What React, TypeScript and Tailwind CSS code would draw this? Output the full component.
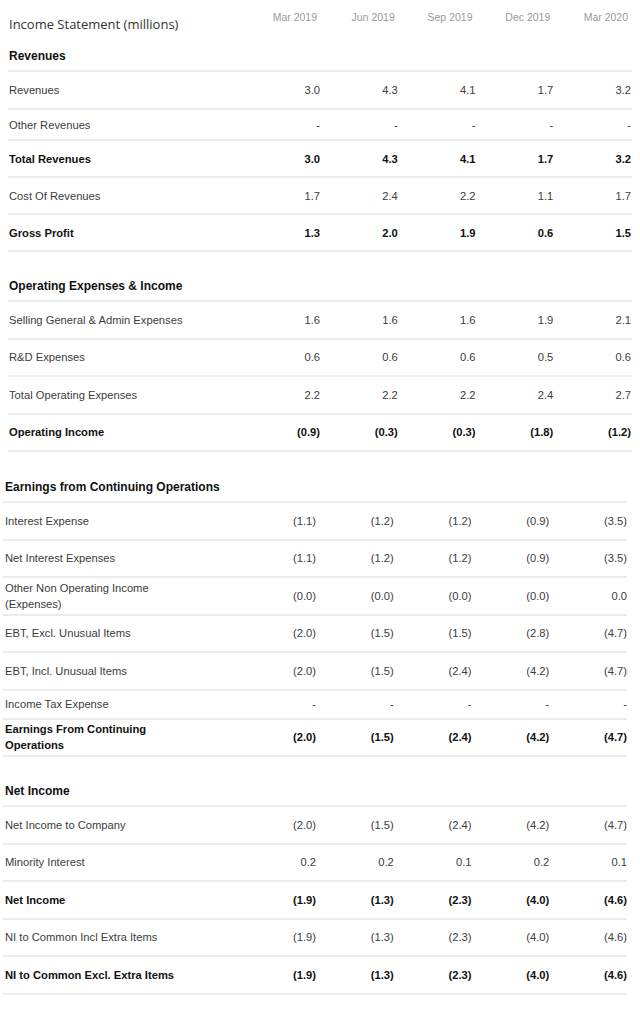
import React from "react";

type Row = { label: string; values: string[]; bold?: boolean; h?: string };
type Section = { title: string; rows: Row[]; mt: string };

const topSections: Section[] = [
  {
    title: "Revenues",
    mt: "mt-0",
    rows: [
      { label: "Revenues", values: ["3.0", "4.3", "4.1", "1.7", "3.2"], h: "h-[38px]" },
      { label: "Other Revenues", values: ["-", "-", "-", "-", "-"], h: "h-[31px]" },
      { label: "Total Revenues", values: ["3.0", "4.3", "4.1", "1.7", "3.2"], bold: true, h: "h-[37px]" },
      { label: "Cost Of Revenues", values: ["1.7", "2.4", "2.2", "1.1", "1.7"], h: "h-[37px]" },
      { label: "Gross Profit", values: ["1.3", "2.0", "1.9", "0.6", "1.5"], bold: true, h: "h-[37px]" },
    ],
  },
  {
    title: "Operating Expenses & Income",
    mt: "mt-[18px]",
    rows: [
      { label: "Selling General & Admin Expenses", values: ["1.6", "1.6", "1.6", "1.9", "2.1"] },
      { label: "R&D Expenses", values: ["0.6", "0.6", "0.6", "0.5", "0.6"] },
      { label: "Total Operating Expenses", values: ["2.2", "2.2", "2.2", "2.4", "2.7"] },
      { label: "Operating Income", values: ["(0.9)", "(0.3)", "(0.3)", "(1.8)", "(1.2)"], bold: true },
    ],
  },
];

const bottomSections: Section[] = [
  {
    title: "Earnings from Continuing Operations",
    mt: "mt-[19px]",
    rows: [
      { label: "Interest Expense", values: ["(1.1)", "(1.2)", "(1.2)", "(0.9)", "(3.5)"] },
      { label: "Net Interest Expenses", values: ["(1.1)", "(1.2)", "(1.2)", "(0.9)", "(3.5)"] },
      { label: "Other Non Operating Income (Expenses)", values: ["(0.0)", "(0.0)", "(0.0)", "(0.0)", "0.0"] },
      { label: "EBT, Excl. Unusual Items", values: ["(2.0)", "(1.5)", "(1.5)", "(2.8)", "(4.7)"] },
      { label: "EBT, Incl. Unusual Items", values: ["(2.0)", "(1.5)", "(2.4)", "(4.2)", "(4.7)"] },
      { label: "Income Tax Expense", values: ["-", "-", "-", "-", "-"], h: "h-[29px]" },
      { label: "Earnings From Continuing Operations", values: ["(2.0)", "(1.5)", "(2.4)", "(4.2)", "(4.7)"], bold: true },
    ],
  },
  {
    title: "Net Income",
    mt: "mt-[18px]",
    rows: [
      { label: "Net Income to Company", values: ["(2.0)", "(1.5)", "(2.4)", "(4.2)", "(4.7)"] },
      { label: "Minority Interest", values: ["0.2", "0.2", "0.1", "0.2", "0.1"] },
      { label: "Net Income", values: ["(1.9)", "(1.3)", "(2.3)", "(4.0)", "(4.6)"], bold: true },
      { label: "NI to Common Incl Extra Items", values: ["(1.9)", "(1.3)", "(2.3)", "(4.0)", "(4.6)"] },
      { label: "NI to Common Excl. Extra Items", values: ["(1.9)", "(1.3)", "(2.3)", "(4.0)", "(4.6)"], bold: true },
    ],
  },
];

const dates = ["Mar 2019", "Jun 2019", "Sep 2019", "Dec 2019", "Mar 2020"];

function SectionBlock({ s, labelPad, valPad }: { s: Section; labelPad: string; valPad: string }) {
  return (
    <div className={s.mt}>
      <div
        className={`h-[32px] flex items-center pt-[2px] border-b-2 border-[#ececec] ${labelPad} text-[12px] font-bold text-[#111]`}
      >
        {s.title}
      </div>
      {s.rows.map((r) => (
        <div
          key={r.label}
          className={`grid grid-cols-[1fr_repeat(5,77.75px)] items-center border-b-2 border-[#ececec] ${
            r.h ?? "h-[37.5px]"
          } text-[11.2px] ${r.bold ? "font-bold text-[#111]" : "text-[#3c3c3c]"}`}
        >
          <div className={`${labelPad}`}>
            <div className="w-[180px] leading-[16px]">{r.label}</div>
          </div>
          {r.values.map((v, i) => (
            <div key={i} className={`text-right ${valPad} leading-[16px]`}>
              {v}
            </div>
          ))}
        </div>
      ))}
    </div>
  );
}

export default function App() {
  return (
    <div
      className="w-[640px] h-[1009px] bg-white overflow-hidden"
      style={{ fontFamily: '"Liberation Sans", Arial, sans-serif' }}
    >
      <div className="ml-[8px] w-[624px]">
        <div className="grid grid-cols-[1fr_repeat(5,77.75px)] h-[40px] items-start">
          <div
            className="pl-[1px] pt-[14px] text-[13px] leading-[20px] text-[#333]"
            style={{ fontFamily: '"Open Sans", "Noto Sans", sans-serif' }}
          >
            Income Statement (millions)
          </div>
          {dates.map((d) => (
            <div key={d} className="pt-[11px] pr-[4px] text-right text-[10.5px] leading-[13px] text-[#9a9a9a]">
              {d}
            </div>
          ))}
        </div>
        {topSections.map((s) => (
          <SectionBlock key={s.title} s={s} labelPad="pl-[1px]" valPad="pr-[1px]" />
        ))}
      </div>
      <div className="ml-[3px] w-[624px]">
        {bottomSections.map((s) => (
          <SectionBlock key={s.title} s={s} labelPad="pl-[2px]" valPad="pr-0" />
        ))}
      </div>
    </div>
  );
}
